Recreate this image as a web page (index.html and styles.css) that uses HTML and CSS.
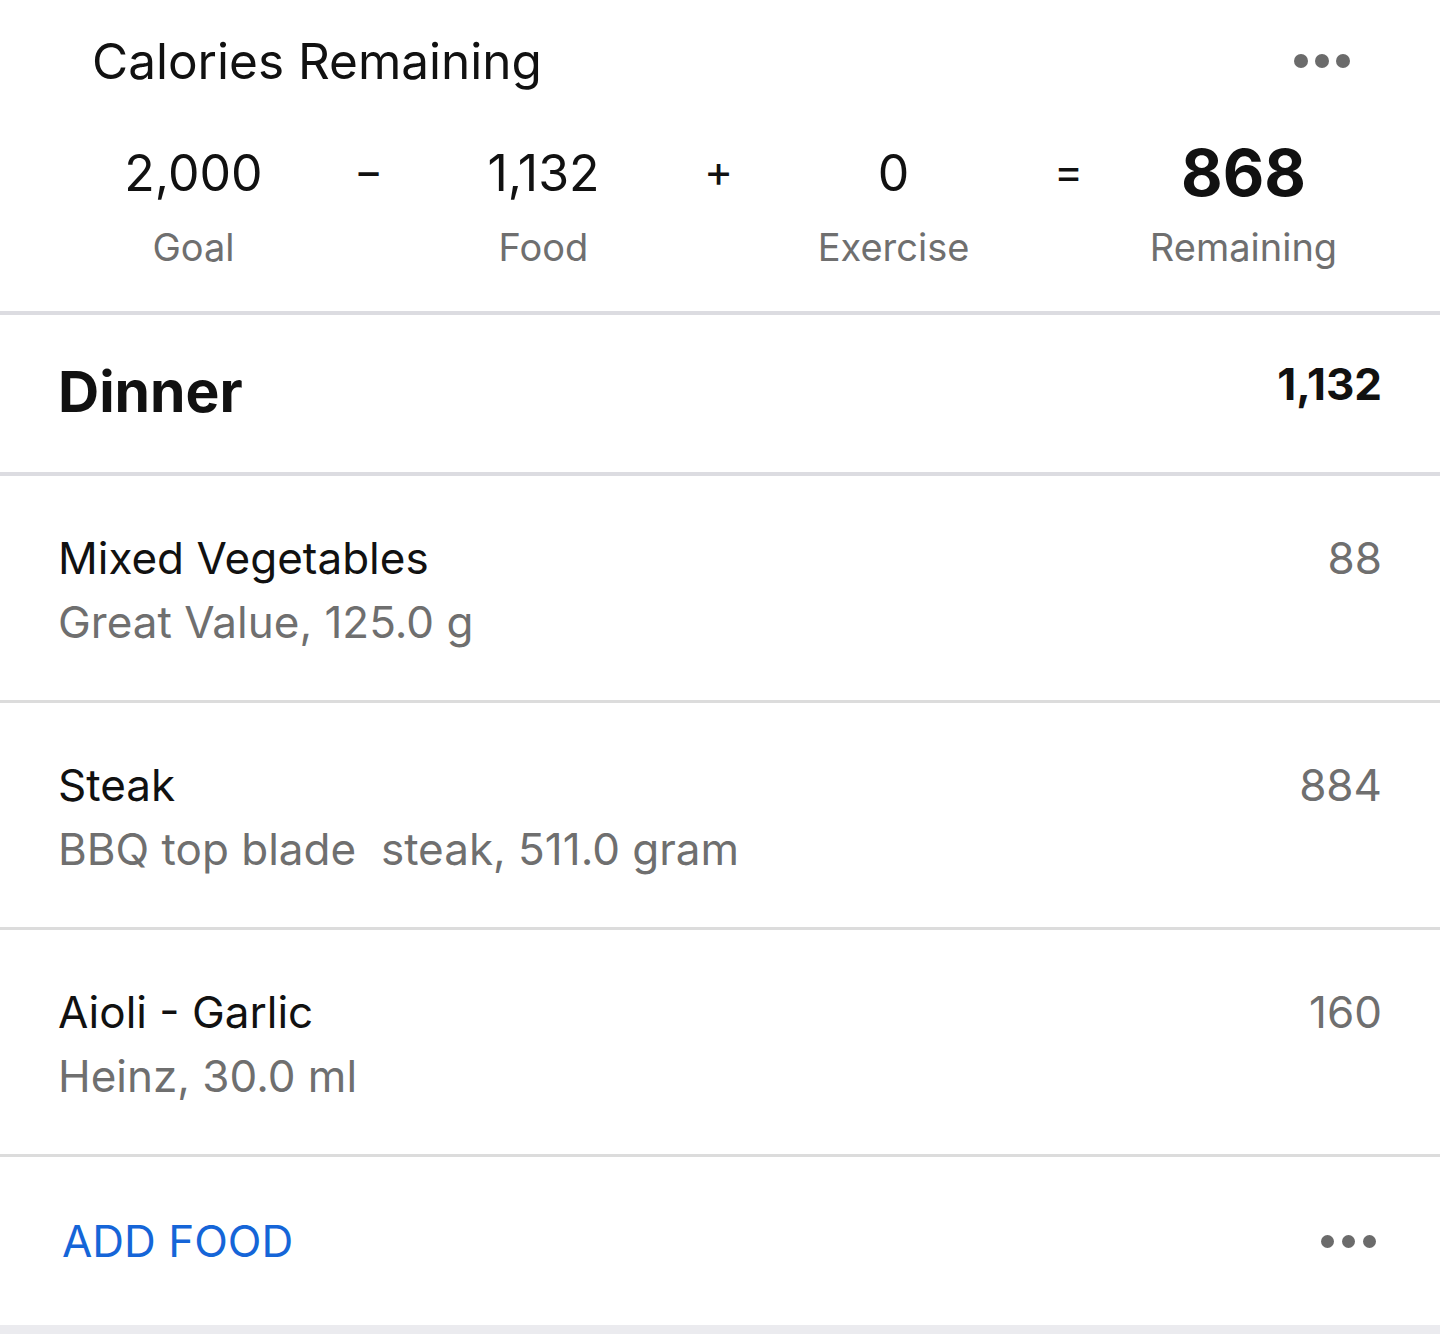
FILE: index.html
```html
<!DOCTYPE html>
<html lang="en">
<head>
    <meta charset="UTF-8">
    <meta name="viewport" content="width=device-width, initial-scale=1.0">
    <title>Diary - Dinner</title>
    <link rel="stylesheet" href="styles.css">
</head>
<body>

    <div class="summary">
        <div class="summary-head">
            <h1>Calories Remaining</h1>
            <span class="dots"><i></i><i></i><i></i></span>
        </div>
        <div class="equation">
            <div class="term"><span class="num">2,000</span><span class="label">Goal</span></div>
            <div class="op">&minus;</div>
            <div class="term"><span class="num">1,132</span><span class="label">Food</span></div>
            <div class="op">+</div>
            <div class="term"><span class="num">0</span><span class="label">Exercise</span></div>
            <div class="op">=</div>
            <div class="term"><span class="num total">868</span><span class="label">Remaining</span></div>
        </div>
    </div>

    <div class="meal">
        <div class="meal-head">
            <h2>Dinner</h2>
            <span class="meal-total">1,132</span>
        </div>

        <div class="food">
            <div class="food-info">
                <div class="food-name">Mixed Vegetables</div>
                <div class="food-desc">Great Value, 125.0 g</div>
            </div>
            <div class="food-cal">88</div>
        </div>

        <div class="food">
            <div class="food-info">
                <div class="food-name">Steak</div>
                <div class="food-desc">BBQ top blade&nbsp; steak, 511.0 gram</div>
            </div>
            <div class="food-cal">884</div>
        </div>

        <div class="food">
            <div class="food-info">
                <div class="food-name">Aioli - Garlic</div>
                <div class="food-desc">Heinz, 30.0 ml</div>
            </div>
            <div class="food-cal">160</div>
        </div>

        <div class="meal-foot">
            <a class="add-food" href="#">ADD FOOD</a>
            <span class="dots"><i></i><i></i><i></i></span>
        </div>
    </div>

</body>
</html>
```

FILE: styles.css
```css
body {
    font-family: Inter, "Noto Sans", sans-serif;
    background-color: #ebebef;
    color: #111;
    margin: 0;
    padding: 0;
}

.summary {
    background-color: #fff;
    border-bottom: 4px solid #dcdce1;
}

.summary-head {
    display: flex;
    justify-content: space-between;
    align-items: center;
    padding: 29px 90px 0 92px;
}

h1 {
    margin: 0;
    font-size: 49.5px;
    font-weight: 400;
    line-height: 64px;
}

.dots {
    display: flex;
    gap: 7px;
}

.dots i {
    width: 14px;
    height: 14px;
    border-radius: 50%;
    background-color: #6b6b6b;
}

.equation {
    display: grid;
    grid-template-columns: repeat(7, 175px);
    margin-left: 106px;
    padding: 48px 0 40px;
}

.term {
    display: flex;
    flex-direction: column;
    align-items: center;
}

.num {
    font-size: 50px;
    line-height: 64px;
}

.num.total {
    font-size: 64px;
    font-weight: 700;
}

.label {
    margin-top: 18px;
    font-size: 38px;
    line-height: 48px;
    color: #6f6f6f;
}

.op {
    text-align: center;
    font-size: 44px;
    line-height: 60px;
}

.meal {
    background-color: #fff;
    border-bottom: 7px solid #ebebef;
}

.meal-head {
    display: flex;
    justify-content: space-between;
    align-items: flex-start;
    padding: 39px 58px 42px;
    border-bottom: 4px solid #dcdce1;
}

h2 {
    margin: 0;
    font-size: 57px;
    font-weight: 700;
    line-height: 76px;
}

.meal-total {
    font-size: 44px;
    font-weight: 700;
    line-height: 60px;
}

.food {
    display: flex;
    justify-content: space-between;
    align-items: flex-start;
    padding: 52px 58px 48px;
    border-bottom: 3px solid #dcdcdc;
}

.food-name {
    font-size: 44px;
    line-height: 60px;
}

.food-desc {
    margin-top: 4px;
    font-size: 44px;
    line-height: 60px;
    color: #6f6f6f;
}

.food-cal {
    font-size: 44px;
    line-height: 60px;
    color: #6f6f6f;
}

.meal-foot {
    display: flex;
    justify-content: space-between;
    align-items: center;
    padding: 59px 64px 59px 62px;
}

.add-food {
    font-size: 44px;
    line-height: 50px;
    color: #1565d8;
    text-decoration: none;
}

.meal-foot .dots {
    gap: 8px;
}

.meal-foot .dots i {
    width: 13px;
    height: 13px;
}
```
